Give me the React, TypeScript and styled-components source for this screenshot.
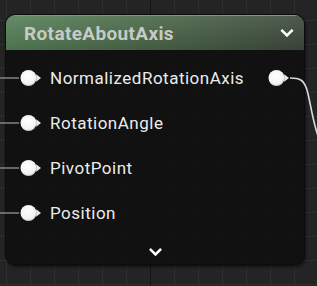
import React from "react";
import styled, { createGlobalStyle } from "styled-components";

const Global = createGlobalStyle`
  html, body { margin: 0; padding: 0; background: #262626; }
  body { font-family: Roboto, "Noto Sans", sans-serif; }
`;

const Canvas = styled.div`
  position: relative;
  width: 317px;
  height: 286px;
  overflow: hidden;
  box-sizing: border-box;
  padding: 14px 0 0 5px;
  background-color: #242424;
  background-image:
    linear-gradient(to right, #151515 1px, transparent 1px),
    linear-gradient(to right, #2e2e2e 1px, transparent 1px),
    linear-gradient(to bottom, #2e2e2e 1px, transparent 1px);
  background-size: 192px 100%, 24px 24px, 24px 24px;
  background-position: 150px 0, 6px 0, 0 20px;
`;

const Wires = styled.svg`
  position: absolute;
  left: 0;
  top: 0;
  pointer-events: none;
  z-index: 2;
`;

const Node = styled.div`
  position: relative;
  z-index: 1;
  width: 300px;
  height: 251px;
  box-sizing: border-box;
  display: flex;
  flex-direction: column;
  border: 1px solid #0b0b0b;
  border-radius: 10px;
  background: rgba(15, 16, 15, 0.93);
  box-shadow: 1px 2px 3px rgba(0, 0, 0, 0.55);
  overflow: hidden;
`;

const Header = styled.div`
  height: 35px;
  flex: none;
  display: flex;
  align-items: center;
  justify-content: space-between;
  padding: 0 10px 0 18px;
  box-sizing: border-box;
  border-top: 1px solid #7d9a7a;
  background:
    linear-gradient(to bottom, rgba(255,255,255,0.08), rgba(0,0,0,0.12)),
    linear-gradient(to right, #58825a 0%, #4d6b4b 45%, #3f4b3e 100%);
`;

const Title = styled.span`
  font-family: Roboto, sans-serif;
  font-weight: 700;
  font-size: 19px;
  color: #c6cbc5;
  letter-spacing: 0.35px;
`;

const Body = styled.div`
  flex: 1;
  display: flex;
  flex-direction: column;
  padding-top: 5px;
`;

const Row = styled.div`
  height: 45px;
  display: flex;
  align-items: center;
  padding-left: 14px;
  padding-right: 14px;
`;

const Label = styled.span`
  margin-left: 8px;
  font-size: 17px;
  letter-spacing: 0.5px;
  color: #ececec;
  flex: 1;
`;

const Footer = styled.div`
  flex: 1;
  display: flex;
  align-items: center;
  justify-content: center;
  padding-top: 5px;
`;

const PinSvg = () => (
  <svg width="22" height="18" viewBox="0 0 22 18">
    <defs>
      <radialGradient id="pg" cx="0.45" cy="0.4" r="0.6">
        <stop offset="0" stopColor="#ffffff" />
        <stop offset="0.8" stopColor="#f2f2f2" />
        <stop offset="1" stopColor="#c8c8c8" />
      </radialGradient>
    </defs>
    <circle cx="8.5" cy="9" r="8" fill="url(#pg)" />
    <path d="M16.2 5.2 L21 9 L16.2 12.8 Z" fill="#e8e8e8" />
  </svg>
);

const Chevron = ({ w = 13 }: { w?: number }) => (
  <svg width={w} height="9" viewBox="0 0 13 9">
    <path d="M1.8 1.8 L6.5 6.5 L11.2 1.8" fill="none" stroke="#ffffff" strokeWidth="2.6" strokeLinecap="square" />
  </svg>
);

const inputs = ["NormalizedRotationAxis", "RotationAngle", "PivotPoint", "Position"];
const rowY = [78, 123, 168, 213];

export default function App() {
  return (
    <>
      <Global />
      <Canvas>
        <Wires width="317" height="286" viewBox="0 0 317 286">
          {rowY.map((y) => (
            <line key={y} x1="0" y1={y} x2="19" y2={y} stroke="#8c8c8c" strokeWidth="1.4" />
          ))}
          <path d="M290 78 C 300 78 304 80 307 90 S 312 118 318 136" fill="none" stroke="#d8d8d8" strokeWidth="1.6" />
        </Wires>
        <Node>
          <Header>
            <Title>RotateAboutAxis</Title>
            <Chevron w={14} />
          </Header>
          <Body>
            {inputs.map((name, i) => (
              <Row key={name}>
                <PinSvg />
                <Label>{name}</Label>
                {i === 0 && <PinSvg />}
              </Row>
            ))}
            <Footer>
              <Chevron />
            </Footer>
          </Body>
        </Node>
      </Canvas>
    </>
  );
}
